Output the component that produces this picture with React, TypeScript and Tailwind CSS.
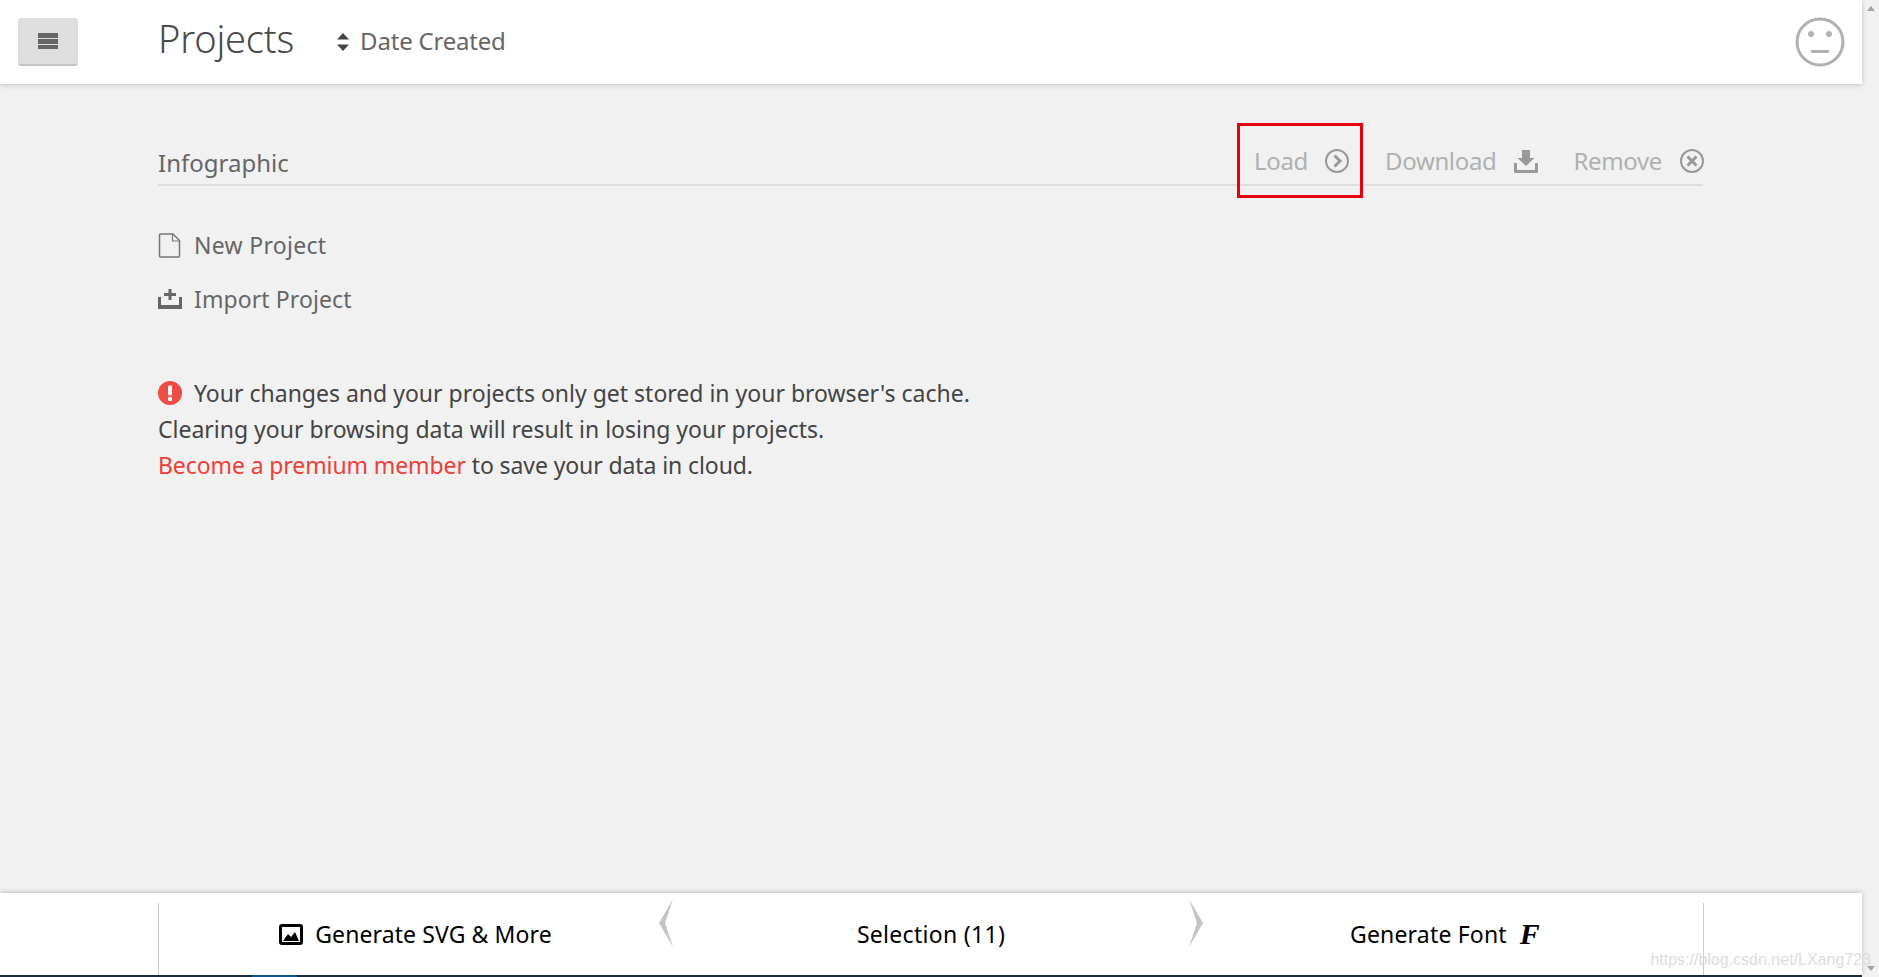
const font = { fontFamily: '"Noto Sans", "Open Sans", sans-serif' };

function Load() {
  return (
    <svg width="24" height="24" viewBox="0 0 24 24" fill="none">
      <circle cx="12" cy="12" r="11" stroke="#999" strokeWidth="2" />
      <path d="M9.500 6.500 L15 12 L9.500 17.500" stroke="#999" strokeWidth="3" />
    </svg>
  );
}
function Remove() {
  return (
    <svg width="24" height="24" viewBox="0 0 24 24" fill="none">
      <circle cx="12" cy="12" r="11" stroke="#999" strokeWidth="2" />
      <path d="M7.500 7.500 L16.500 16.500 M16.500 7.500 L7.500 16.500" stroke="#999" strokeWidth="3" />
    </svg>
  );
}
function Download() {
  return (
    <svg width="24" height="23" viewBox="0 0 24 23" fill="#999">
      <path d="M8 0h8v8h4.500L12 16 3.500 8H8z" />
      <path d="M0 13h3v7h18v-7h3v8.500a1.500 1.500 0 0 1-1.500 1.500h-21A1.500 1.500 0 0 1 0 21.500z" />
    </svg>
  );
}

export default function App() {
  return (
    <div className="relative flex h-[977px] w-full overflow-hidden bg-[#f1f1f1]" style={font}>
      <div className="flex min-w-0 flex-1 flex-col">
        <header className="z-10 flex h-[84px] shrink-0 items-center bg-white pl-[18px] pr-[17px] shadow-[0_1px_5px_rgba(0,0,0,0.2)]">
          <button className="flex h-[48px] w-[60px] items-center justify-center rounded-[3px] border-b-2 border-[#c4c4c4] bg-[#dedede]">
            <span className="flex flex-col gap-[1px]">
              <span className="h-[5px] w-[20px] bg-[#666]" />
              <span className="h-[5px] w-[20px] bg-[#666]" />
              <span className="h-[4px] w-[20px] bg-[#666]" />
            </span>
          </button>
          <h1 className="mb-[8px] ml-[80px] text-[38px] font-light leading-none tracking-[-0.2px] text-[#4a4a4a]">Projects</h1>
          <svg className="ml-[43px]" width="12" height="18" viewBox="0 0 12 18" fill="#444">
            <path d="M6 0l6 6.500H0zM6 18l6-6.500H0z" />
          </svg>
          <span className="mb-[2px] ml-[11px] text-[24px] tracking-[-0.2px] text-[#666]">Date Created</span>
          <svg className="ml-auto" width="50" height="50" viewBox="0 0 50 50" fill="none">
            <circle cx="25" cy="25" r="23" stroke="#b0b0b0" strokeWidth="3" />
            <circle cx="16" cy="17" r="3" fill="#b0b0b0" />
            <circle cx="34" cy="17" r="3" fill="#b0b0b0" />
            <rect x="16" y="33" width="18" height="3" fill="#b0b0b0" />
          </svg>
        </header>

        <main className="flex min-h-0 flex-1 flex-col pl-[158px] pr-[159px] pt-[58px]">
          <div className="flex h-[44px] shrink-0 items-start justify-between border-b-2 border-[#ddd]">
            <span className="pt-[4px] text-[24px] leading-[34px] text-[#666]">Infographic</span>
            <div className="mr-[-1px] flex items-center pt-[2px] text-[24px] leading-[34px] tracking-[-0.35px] text-[#b0b0b0]">
              <span>Load</span>
              <span className="ml-[17px]"><Load /></span>
              <span className="ml-[36px]">Download</span>
              <span className="ml-[18px]"><Download /></span>
              <span className="ml-[35px]">Remove</span>
              <span className="ml-[18px]"><Remove /></span>
            </div>
          </div>

          <div className="mt-[42px] flex items-center text-[23px] leading-[34px] tracking-[0.3px] text-[#666]">
            <svg className="mr-[13px]" width="23" height="25" viewBox="0 0 23 25" fill="none">
              <path d="M2.500 1H15l6.500 6.500V23a1 1 0 0 1-1 1h-18a1 1 0 0 1-1-1V2a1 1 0 0 1 1-1z" stroke="#777" strokeWidth="1.500" />
              <path d="M14.500 1v7h7" stroke="#777" strokeWidth="1.200" />
            </svg>
            New Project
          </div>
          <div className="mt-[20px] flex items-center text-[23px] leading-[34px] tracking-[0.1px] text-[#666]">
            <svg className="mr-[12px]" width="24" height="20" viewBox="0 0 24 20" fill="#666">
              <path d="M10.500 0h3v4H18v3h-4.500v4h-3V7H6V4h4.500z" />
              <path d="M0 8h3v8h18V8h3v12H0z" />
            </svg>
            Import Project
          </div>

          <div className="mt-[59px] text-[23px] leading-[36px] text-[#444]">
            <div className="flex items-center">
              <svg className="mr-[12px]" width="24" height="24" viewBox="0 0 24 24">
                <circle cx="12" cy="12" r="12" fill="#ee4d43" />
                <rect x="10" y="4.500" width="4" height="10" rx="1" fill="#fff" />
                <rect x="10" y="16" width="4" height="4" rx="1" fill="#fff" />
              </svg>
              Your changes and your projects only get stored in your browser's cache.
            </div>
            <div>Clearing your browsing data will result in losing your projects.</div>
            <div className="tracking-[-0.1px]"><span className="text-[#ee4036]">Become a premium member</span> to save your data in cloud.</div>
          </div>
        </main>

        <footer className="z-10 h-[82px] shrink-0 bg-white pl-[158px] pr-[158px] pt-[10px] shadow-[0_-1px_5px_rgba(0,0,0,0.2)]">
          <div className="flex h-[72px] items-center border-x border-[#ccc] pb-[10px] text-[23px] text-black">
            <div className="flex w-[499px] items-center justify-center pl-[14px] tracking-[0.1px]">
              <svg className="mr-[12px]" width="24" height="21" viewBox="0 0 24 21">
                <rect x="1.500" y="1.500" width="21" height="18" rx="1.500" fill="none" stroke="#000" strokeWidth="3" />
                <path d="M4 17l5-7 3 3 4-5 4 9z" fill="#000" />
              </svg>
              Generate SVG &amp; More
            </div>
            <svg className="mb-[22px]" width="16" height="48" viewBox="0 0 16 48">
              <path d="M15 0L1 24l14 24-8-24z" fill="#c4c4c4" />
            </svg>
            <div className="flex-1 text-center tracking-[0.3px]">Selection (11)</div>
            <svg className="mb-[22px]" width="16" height="48" viewBox="0 0 16 48">
              <path d="M1 0l14 24-14 24 8-24z" fill="#c4c4c4" />
            </svg>
            <div className="flex w-[499px] items-center justify-center pr-[17px] tracking-[0.18px]">
              Generate Font
              <span className="ml-[13px] text-[30px] font-bold italic leading-none" style={{ fontFamily: '"Liberation Serif", serif' }}>F</span>
            </div>
          </div>
        </footer>
        <div className="flex h-[2px] shrink-0 bg-[#1c2f3f]">
          <span className="ml-[252px] w-[45px] bg-[#0f5a96]" />
        </div>
      </div>

      <div className="flex w-[17px] shrink-0 flex-col items-center justify-between bg-[#f1f1f1] py-[6px]">
        <span className="h-0 w-0 border-x-[4px] border-b-[5px] border-x-transparent border-b-[#a3a3a3]" />
        <span className="h-0 w-0 border-x-[4px] border-t-[5px] border-x-transparent border-t-[#a3a3a3]" />
      </div>

      <div className="absolute left-[1237px] top-[123px] z-20 h-[75px] w-[126px] border-[3px] border-[#e60012]" />
      <div className="absolute bottom-[8px] right-[8px] z-20 text-[16px] leading-[18px] text-[#dcdcdc]" style={{ fontFamily: '"Liberation Sans", sans-serif' }}>
        https://blog.csdn.net/LXang723
      </div>
    </div>
  );
}
